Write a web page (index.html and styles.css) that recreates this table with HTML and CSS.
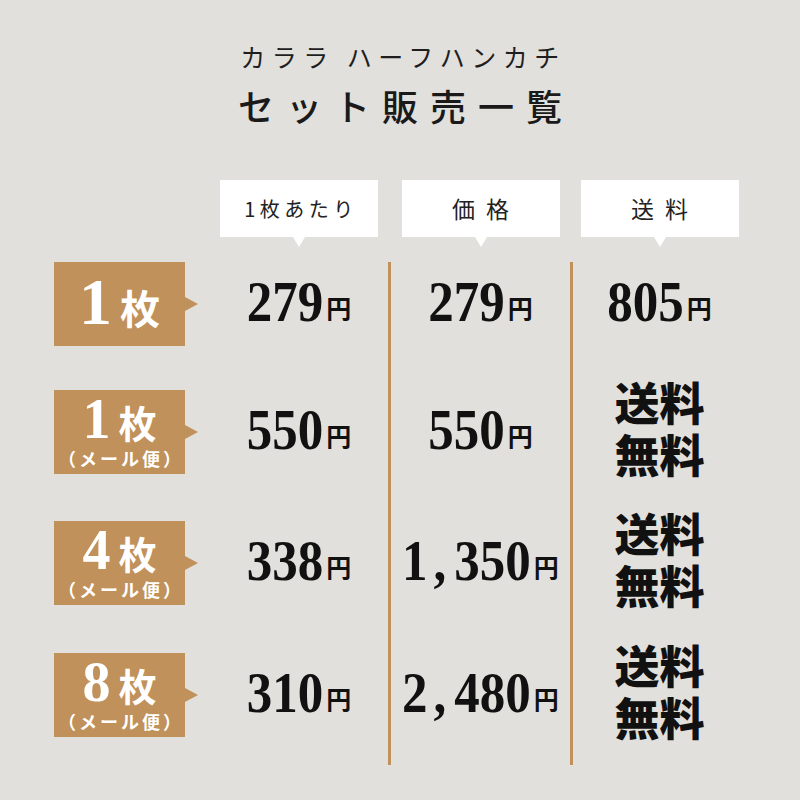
FILE: index.html
```html
<!DOCTYPE html>
<html lang="ja">
<head>
<meta charset="utf-8">
<title>カララ ハーフハンカチ セット販売一覧</title>
<link rel="stylesheet" href="styles.css">
</head>
<body>
<div class="page">
  <header class="title">
    <div class="title-sub">カララ ハーフハンカチ</div>
    <h1 class="title-main">セット販売一覧</h1>
  </header>

  <div class="chart">
    <div class="head col-1"><span class="head-text small">1枚あたり</span></div>
    <div class="head col-2"><span class="head-text">価格</span></div>
    <div class="head col-3"><span class="head-text">送料</span></div>

    <div class="vline line-a"></div>
    <div class="vline line-b"></div>

    <!-- row 1 -->
    <div class="label row-1">
      <div class="label-box">
        <div class="qty big"><span class="qn">1</span><span class="qk">枚</span></div>
      </div>
      <div class="arrow"></div>
    </div>
    <div class="cell col-1 row-1"><span class="price"><span class="num">279</span><span class="yen">円</span></span></div>
    <div class="cell col-2 row-1"><span class="price"><span class="num">279</span><span class="yen">円</span></span></div>
    <div class="cell col-3 row-1"><span class="price"><span class="num">805</span><span class="yen">円</span></span></div>

    <!-- row 2 -->
    <div class="label row-2">
      <div class="label-box">
        <div class="qty"><span class="qn">1</span><span class="qk">枚</span></div>
        <div class="note">（メール便）</div>
      </div>
      <div class="arrow"></div>
    </div>
    <div class="cell col-1 row-2"><span class="price"><span class="num">550</span><span class="yen">円</span></span></div>
    <div class="cell col-2 row-2"><span class="price"><span class="num">550</span><span class="yen">円</span></span></div>
    <div class="cell col-3 row-2"><div class="free"><div class="free-line">送料</div><div class="free-line">無料</div></div></div>

    <!-- row 3 -->
    <div class="label row-3">
      <div class="label-box">
        <div class="qty"><span class="qn">4</span><span class="qk">枚</span></div>
        <div class="note">（メール便）</div>
      </div>
      <div class="arrow"></div>
    </div>
    <div class="cell col-1 row-3"><span class="price"><span class="num">338</span><span class="yen">円</span></span></div>
    <div class="cell col-2 row-3"><span class="price"><span class="num">1<span class="comma">,</span>350</span><span class="yen">円</span></span></div>
    <div class="cell col-3 row-3"><div class="free"><div class="free-line">送料</div><div class="free-line">無料</div></div></div>

    <!-- row 4 -->
    <div class="label row-4">
      <div class="label-box">
        <div class="qty"><span class="qn">8</span><span class="qk">枚</span></div>
        <div class="note">（メール便）</div>
      </div>
      <div class="arrow"></div>
    </div>
    <div class="cell col-1 row-4"><span class="price"><span class="num">310</span><span class="yen">円</span></span></div>
    <div class="cell col-2 row-4"><span class="price"><span class="num">2<span class="comma">,</span>480</span><span class="yen">円</span></span></div>
    <div class="cell col-3 row-4"><div class="free"><div class="free-line">送料</div><div class="free-line">無料</div></div></div>
  </div>
</div>
</body>
</html>
```

FILE: styles.css
```css
html, body {
  margin: 0;
  padding: 0;
}

body {
  background: #e2e0dc;
  font-family: "Noto Sans CJK JP", "Noto Sans", sans-serif;
  color: #111;
}

.page {
  width: 800px;
  height: 800px;
  overflow: hidden;
}

/* ---------- title ---------- */
.title {
  padding-top: 41px;
  text-align: center;
}

.title-sub {
  font-size: 25px;
  line-height: 30px;
  letter-spacing: 6.5px;
  padding-left: 6px;
  font-weight: 400;
  color: #1e1e1e;
}

.title-main {
  margin: 12px 0 0;
  font-size: 36px;
  line-height: 44px;
  letter-spacing: 12px;
  padding-left: 12px;
  font-weight: 500;
  color: #1a1a1a;
}

/* ---------- chart grid ---------- */
.chart {
  display: grid;
  margin: 53px 0 0 54px;
  grid-template-columns: 144px 12px 178px 3px 179px 3px 173px;
  grid-template-rows: 57px 25px 84px 44px 84px 47px 84px 48px 84px 28px;
}

.col-1 { grid-column: 3; }
.col-2 { grid-column: 5; }
.col-3 { grid-column: 7; }

.row-1 { grid-row: 3; }
.row-2 { grid-row: 5; }
.row-3 { grid-row: 7; }
.row-4 { grid-row: 9; }

/* header bubbles */
.head {
  grid-row: 1;
  justify-self: center;
  width: 158px;
  height: 57px;
  background: #fff;
  position: relative;
  display: flex;
  align-items: center;
  justify-content: center;
}

.head::after {
  content: "";
  position: absolute;
  left: 50%;
  bottom: -10px;
  margin-left: -6px;
  border-left: 6px solid transparent;
  border-right: 6px solid transparent;
  border-top: 10px solid #fff;
}

.head-text {
  font-size: 23px;
  line-height: 1;
  letter-spacing: 11px;
  padding-left: 11px;
  color: #222;
  font-weight: 400;
}

.head-text.small {
  font-size: 20px;
  letter-spacing: 4.5px;
  padding-left: 4px;
}

/* vertical divider lines */
.vline {
  grid-row: 3 / 11;
  background: #c0915a;
}

.line-a { grid-column: 4; }
.line-b { grid-column: 6; }

/* label (brown) */
.label {
  grid-column: 1;
  display: flex;
  align-items: center;
}

.label-box {
  width: 131px;
  height: 84px;
  background: #c0915a;
  color: #fff;
  display: flex;
  flex-direction: column;
  align-items: center;
  justify-content: center;
}

.arrow {
  width: 0;
  height: 0;
  border-top: 7px solid transparent;
  border-bottom: 7px solid transparent;
  border-left: 13px solid #c0915a;
}

.qty {
  display: flex;
  align-items: baseline;
  line-height: 46px;
}

.qn {
  font-family: "Liberation Serif", serif;
  font-weight: 700;
  font-size: 56px;
  margin-right: 8px;
}

.qk {
  font-size: 38px;
  font-weight: 700;
}

.qty.big {
  line-height: 60px;
}

.qty.big .qn {
  font-size: 66px;
  margin-right: 8px;
}

.qty.big .qk {
  font-size: 40px;
}

.note {
  font-size: 18px;
  line-height: 20px;
  font-weight: 700;
  letter-spacing: 3px;
  padding-left: 3px;
  margin-top: 3px;
}

/* price cells */
.cell {
  display: flex;
  align-items: center;
  justify-content: center;
}

.price {
  display: flex;
  align-items: baseline;
}

.num {
  display: inline-block;
  font-family: "Liberation Serif", serif;
  font-weight: 700;
  font-size: 51px;
  line-height: 60px;
  color: #111;
  transform: scaleY(1.13);
  transform-origin: 50% 47px;
}

.comma {
  margin: 0 8px 0 6px;
}

.yen {
  font-size: 25px;
  font-weight: 700;
  margin-left: 3px;
  position: relative;
  top: -3px;
}

.free {
  text-align: center;
  color: #111;
}

.free-line {
  font-family: "Liberation Serif", "Noto Sans CJK JP", sans-serif;
  font-size: 45px;
  line-height: 52px;
  height: 52px;
  font-weight: 900;
}
```
